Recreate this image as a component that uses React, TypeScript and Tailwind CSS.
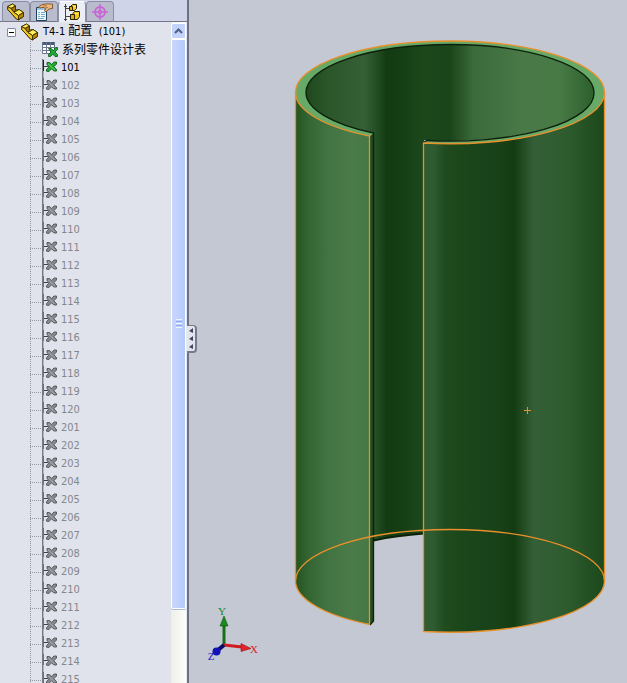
import { useState } from "react";
import clsx from "clsx";

const configurations = [
  ...Array.from({ length: 20 }, (_, i) => 101 + i),
  ...Array.from({ length: 15 }, (_, i) => 201 + i),
];

function PartIcon() {
  return (
    <svg width="18" height="18" viewBox="0 0 18 18" className="shrink-0" aria-hidden="true">
      <g stroke="#3a2a00" strokeWidth=".9" strokeLinejoin="round">
        <path d="M.8 3.5 L5.5 1 L8.5 3 V7 L12 6.5 L16.5 9.5 V13.5 L11.5 16.8 L9.5 16 L.8 6.5 Z" fill="#d9a90c" />
        <path d="M.8 3.5 L5.5 1 L8.5 3 L4 5.5 Z" fill="#ffee58" />
        <path d="M4 5.5 L8.5 3 V7 L7 9.5 Z" fill="#a87c00" />
        <path d="M7 9.5 L12 6.5 L16.5 9.5 L11.5 12.5 Z" fill="#ffee58" />
        <path d="M11.5 12.5 L16.5 9.5 V13.5 L11.5 16.8 Z" fill="#b98700" />
        <path d="M.8 3.5 L4 5.5 L7 9.5 L11.5 12.5 V16.8 L9.5 16 L.8 6.5 Z" fill="#f3cb1f" />
      </g>
    </svg>
  );
}

function PropertyIcon() {
  return (
    <svg width="18" height="18" viewBox="0 0 18 18" aria-hidden="true">
      <path d="M1.5 4.5 H11.5 V17.5 H1.5 Z" fill="#eef8ff" stroke="#1f3f5a" />
      <path d="M2 5 H11 V7 H2 Z" fill="#9cc9e8" />
      <path d="M3 9.5 H5 M6 9.5 H10 M3 11.5 H5 M6 11.5 H10 M3 13.5 H5 M6 13.5 H10 M3 15.5 H9" stroke="#75acd2" />
      <path d="M3.5 4 L7 1.5 L12 .8 L17.5 1 V5.5 L14 6 L11 8.8 L9.5 8 L10.5 5.5 L8.5 4.5 L4.5 5 Z" fill="#edb77d" stroke="#6b451f" strokeWidth=".8" />
      <path d="M8 2.8 L12 3 M10 5 L13 4.5" stroke="#9c6834" strokeWidth=".8" />
    </svg>
  );
}

function ConfigurationIcon() {
  return (
    <svg width="18" height="18" viewBox="0 0 18 18" aria-hidden="true">
      <path d="M2.5 1 V18 M2.5 5.5 H7 M2.5 13.5 H7" stroke="#444" fill="none" />
      <path d="M1 3.5 H4 M1 16.5 H4" stroke="#444" />
      <g fill="#f4ca1e" stroke="#2b1f00">
        <path d="M7.5 3.5 L9.5 1.5 H13.5 V5.5 L11.5 7.5 H7.5 Z" />
        <path d="M10 10.5 L11.5 8.5 H16.5 V13.5 L14.5 16.5 H10 Z" />
        <path d="M6.5 3.5 H9.5 V7.5 H6.5 Z M7.5 11.5 H11.5 V16.5 H7.5 Z" fill="#e0ae10" />
      </g>
      <path d="M10 3.5 H12.5 M12 10.5 H15" stroke="#fff58c" />
    </svg>
  );
}

function TargetIcon() {
  return (
    <svg width="18" height="18" viewBox="0 0 18 18" fill="none" stroke="#c765d6" aria-hidden="true">
      <circle cx="9" cy="9" r="5" strokeWidth="1.8" />
      <circle cx="9" cy="9" r="2" fill="#e9b5f0" />
      <path d="M9 1 V17 M1 9 H17" strokeWidth="1.5" />
    </svg>
  );
}

function DesignTableIcon() {
  return (
    <svg width="16" height="18" viewBox="0 0 16 18" className="shrink-0" aria-hidden="true">
      <path d="M0 1 H13 V13 H0 Z" fill="#fff" />
      <path d="M0 1 H13 V4 H0 Z" fill="#4a5a78" />
      <path d="M.5 1 V12.5 H12.5 V1 M4.5 1 V12 M8.5 1 V12 M0 6.5 H13 M0 9.5 H13" stroke="#6b7a92" fill="none" />
      <path d="M6.5 7.5 H9 L11.5 9.5 L13.5 6.5 H15.5 V8.5 L13 11 L15.5 13.5 V15.5 H13 L10.8 13 L8.5 15.5 H6.5 V13.5 L9 11 Z" fill="#1faa35" stroke="#0a4f18" strokeWidth=".8" />
    </svg>
  );
}

function ExcelConfigIcon({ active }: { active: boolean }) {
  return (
    <svg width="16" height="18" viewBox="0 0 16 18" className="shrink-0" aria-hidden="true">
      <path d="M.5 0 V18" stroke="#777a80" />
      <path d="M1.5 0 V18" stroke="#b3b5bb" />
      <path d="M1.5 1 V12" stroke={active ? "#222" : "#6e7176"} />
      <path d="M2 7.5 H6" stroke="#3e4044" />
      <path
        d="M5 3.5 H7.5 L9.8 5.5 L12 3 H14.5 L14.5 5 L11.8 7.8 L14.5 10.5 V12 H12 L9.5 9.8 L7 12.5 L4.5 12.2 V10.5 L7.2 8 L5 5.5 Z"
        fill={active ? "#25ab34" : "#85898e"}
        stroke={active ? "#0b5c18" : "#505358"}
        strokeWidth=".9"
      />
      <path d="M6 4.8 L12.8 11" stroke={active ? "#7de07b" : "#b4b8bc"} strokeWidth=".8" />
    </svg>
  );
}

function Branch() {
  return (
    <svg width="12" height="18" viewBox="0 0 12 18" className="shrink-0" aria-hidden="true">
      <path d="M.5 0 V18 M0 9.5 H12" stroke="#9498a2" strokeDasharray="1 1" />
    </svg>
  );
}

const tabs = [
  { name: "FeatureManager", icon: <PartIcon /> },
  { name: "PropertyManager", icon: <PropertyIcon /> },
  { name: "ConfigurationManager", icon: <ConfigurationIcon /> },
  { name: "DimXpertManager", icon: <TargetIcon /> },
];

function TabBar() {
  const [current, setCurrent] = useState("ConfigurationManager");

  return (
    <div role="tablist" className="flex h-[22px] shrink-0 bg-[#d0d4e9] pt-px">
      <div className="w-0.5 border-b border-[#74778c]" />
      {tabs.map((tab) => (
        <button
          key={tab.name}
          type="button"
          role="tab"
          aria-label={tab.name}
          aria-selected={tab.name === current}
          onClick={() => setCurrent(tab.name)}
          className={clsx(
            "flex w-7 items-center justify-center rounded-t border-x border-t",
            tab.name === current
              ? "border-x-[#8b8ea3] border-t-white bg-[#eceef5]"
              : "border-b border-x-[#8b8ea3] border-t-[#8b8ea3] border-b-[#74778c] bg-[#b9bccd]"
          )}
        >
          {tab.icon}
        </button>
      ))}
      <div className="flex-1 border-b border-[#74778c]" />
    </div>
  );
}

function ConfigTree() {
  const [open, setOpen] = useState(true);
  const [active, setActive] = useState(101);

  return (
    <div className="min-w-0 flex-1 overflow-hidden bg-[#e0e3eb] pt-px">
      <div className="flex h-[18px] items-center pl-[7px]">
        <button
          type="button"
          aria-label="Toggle configurations"
          aria-expanded={open}
          onClick={() => setOpen(!open)}
          className="mr-[5px] flex size-[9px] items-center justify-center rounded-[1px] border border-[#7f8ba6] bg-white"
        >
          <span className="h-px w-[5px] bg-black" />
        </button>
        <PartIcon />
        <span className="ml-1 whitespace-pre text-[11px] text-black">
          T4-1 <span className="text-xs">配置</span>{"  "}(101)
        </span>
      </div>
      {open && (
        <ul className="pl-[30px]">
          <li className="flex h-[18px] items-center">
            <Branch />
            <DesignTableIcon />
            <button type="button" className="ml-1 whitespace-nowrap text-xs text-black">
              系列零件设计表
            </button>
          </li>
          {configurations.map((id) => (
            <li key={id} className="flex h-[18px] items-center">
              <Branch />
              <ExcelConfigIcon active={id === active} />
              <button
                type="button"
                onClick={() => setActive(id)}
                className={clsx("ml-[3px] text-[11px] leading-[14px]", id === active ? "text-black" : "text-[#85878c]")}
              >
                {id}
              </button>
            </li>
          ))}
        </ul>
      )}
    </div>
  );
}

function ScrollBar() {
  return (
    <div className="flex w-[15px] shrink-0 flex-col bg-linear-to-r from-[#efeee8] to-[#fdfdfa] pt-px">
      <button
        type="button"
        aria-label="Scroll up"
        className="flex h-4 shrink-0 items-center justify-center rounded-xs border border-white bg-[#c3d3fb]"
      >
        <svg width="9" height="6" viewBox="0 0 9 6" aria-hidden="true">
          <path d="M1 5 L4.5 1.5 L8 5" fill="none" stroke="#4d6185" strokeWidth="2" />
        </svg>
      </button>
      <div className="flex min-h-0 flex-1 flex-col">
        <div className="flex h-[88.5%] flex-col items-center justify-center gap-px rounded-xs border border-white bg-linear-to-r from-[#c9d7fd] to-[#b5cafa] shadow-[0_1px_0_#a6b9df]">
          <span className="h-px w-1.5 bg-[#eef4fe]" />
          <span className="h-px w-1.5 bg-[#8caaf0]" />
          <span className="h-px w-1.5 bg-[#eef4fe]" />
          <span className="h-px w-1.5 bg-[#8caaf0]" />
          <span className="h-px w-1.5 bg-[#eef4fe]" />
        </div>
      </div>
    </div>
  );
}

function Model() {
  return (
    <svg viewBox="189 0 438 683" className="size-full" role="img" aria-label="Slotted sleeve">
      <defs>
        <linearGradient id="inside" gradientUnits="userSpaceOnUse" x1="306" y1="0" x2="594" y2="0">
          <stop offset="0" stopColor="#1d491d" />
          <stop offset=".08" stopColor="#2b572b" />
          <stop offset=".2" stopColor="#355f35" />
          <stop offset=".23" stopColor="#2a552a" />
          <stop offset=".28" stopColor="#133b12" />
          <stop offset=".34" stopColor="#153f14" />
          <stop offset=".4" stopColor="#1b471b" />
          <stop offset=".5" stopColor="#1a451a" />
          <stop offset=".54" stopColor="#2a562a" />
          <stop offset=".58" stopColor="#3b6a3b" />
          <stop offset=".75" stopColor="#487947" />
          <stop offset=".88" stopColor="#487a46" />
          <stop offset="1" stopColor="#2b5f2b" />
        </linearGradient>
        <linearGradient id="left" gradientUnits="userSpaceOnUse" x1="295" y1="0" x2="370" y2="0">
          <stop offset="0" stopColor="#24541f" />
          <stop offset=".2" stopColor="#356735" />
          <stop offset=".45" stopColor="#427342" />
          <stop offset=".75" stopColor="#4a7b49" />
          <stop offset="1" stopColor="#467845" />
        </linearGradient>
        <linearGradient id="right" gradientUnits="userSpaceOnUse" x1="423" y1="0" x2="605" y2="0">
          <stop offset="0" stopColor="#315d32" />
          <stop offset=".06" stopColor="#2f5b30" />
          <stop offset=".12" stopColor="#1f4b1f" />
          <stop offset=".2" stopColor="#1b471b" />
          <stop offset=".4" stopColor="#18421a" />
          <stop offset=".5" stopColor="#143c12" />
          <stop offset=".56" stopColor="#274f27" />
          <stop offset=".61" stopColor="#345f37" />
          <stop offset=".8" stopColor="#2e5b2d" />
          <stop offset="1" stopColor="#1b481b" />
        </linearGradient>
      </defs>

      {/* inner wall, seen over the rim and through the slot */}
      <ellipse cx="450" cy="92.5" rx="145" ry="48.5" fill="url(#inside)" />
      <path d="M373.5 120 H424 V533.5 A144 48 0 0 0 373.5 540.5 Z" fill="url(#inside)" />
      <path d="M373.5 540.5 A144 48 0 0 1 424 533.5" fill="none" stroke="#0b210a" strokeWidth="2" />
      <path d="M370 136 L373.5 133 V621 L370 625 Z" fill="#214c21" />

      <path d="M295.5 92.5 A154.5 51 0 0 0 370 136 V624.5 A154.5 51 0 0 1 295.5 581 Z" fill="url(#left)" />
      <path d="M423.5 143 A154.5 51 0 0 0 604.5 92.5 V581 A154.5 51 0 0 1 423.5 631.5 Z" fill="url(#right)" />

      {/* rim */}
      <path
        d="M370 136 A154.5 51 0 0 1 295.5 92.5 A154.5 51.5 0 0 1 604.5 92.5 A154.5 51 0 0 1 423.5 143
           L427 140.5 A144 48 0 0 0 594 92.5 A144 48 0 0 0 306 92.5 A144 48 0 0 0 373.5 133 Z"
        fill="#67a966"
      />
      <path
        d="M423.5 142.5 L427 140.5 A144 48 0 0 0 594 92.5 A144 48 0 0 0 306 92.5 A144 48 0 0 0 373.5 133 V621 L370 625"
        fill="none"
        stroke="#0c200b"
        strokeWidth="1.3"
      />

      <g fill="none" stroke="#e8902b" strokeWidth="1.3">
        <path d="M369.5 625 V136 A154.5 51 0 0 1 295.5 92.5 A154.5 51.5 0 0 1 604.5 92.5 A154.5 51 0 0 1 423.5 143 V631.5 A154.5 51 0 0 0 604.5 581 V92.5" />
        <path d="M295.5 92.5 V581 A154.5 51 0 0 0 370 624.5" />
        <path d="M295.5 581 A154.5 51.5 0 0 1 604.5 581" />
        <path d="M524 410.5 H531 M527.5 407 V414" strokeWidth="1" />
      </g>

      {/* orientation triad */}
      <path d="M224 645 V624" stroke="#167019" strokeWidth="3" />
      <path d="M224 616 L228 626 H220 Z" fill="#188a1f" stroke="#0c5512" strokeWidth=".6" />
      <path d="M224 645 L242 647" stroke="#d01c20" strokeWidth="3" />
      <path d="M251 648.5 L241 643.5 V651.5 Z" fill="#e0262a" stroke="#9d1114" strokeWidth=".6" />
      <path d="M224 645 L218 650" stroke="#0c0c66" strokeWidth="4" />
      <circle cx="216.5" cy="651.5" r="4" fill="#1212b8" />
      <g className="font-['Liberation_Serif',serif] text-[11px]" textAnchor="middle">
        <text x="222" y="615" fill="#208423">Y</text>
        <text x="254" y="653" fill="#dd2227">X</text>
        <text x="211" y="660" fill="#1818cc">Z</text>
      </g>
    </svg>
  );
}

export default function App() {
  const [collapsed, setCollapsed] = useState(false);

  return (
    <div className="flex h-screen overflow-hidden bg-[#c4c8d2] font-['DejaVu_Sans_Condensed','Noto_Sans_CJK_SC',sans-serif]">
      <aside className="relative flex shrink-0 border-r-2 border-[#6e7085]">
        {!collapsed && (
          <div className="flex w-[187px] flex-col bg-[#e6e8f1]">
            <TabBar />
            <div className="flex min-h-0 flex-1 pr-px">
              <ConfigTree />
              <ScrollBar />
            </div>
          </div>
        )}
        <button
          type="button"
          aria-label="Collapse panel"
          onClick={() => setCollapsed(!collapsed)}
          className="absolute top-[325px] left-full flex h-7 w-2.5 flex-col items-center justify-center gap-[3px] rounded-r border-t border-r-2 border-b-2 border-[#77798d] bg-[#e3e5ee]"
        >
          {[0, 1, 2].map((i) => (
            <svg key={i} width="4" height="5" viewBox="0 0 4 5" aria-hidden="true">
              <path d="M4 0 V5 L0 3 Z" fill="#41455f" />
            </svg>
          ))}
        </button>
      </aside>
      <main className="min-w-0 flex-1">
        <Model />
      </main>
    </div>
  );
}
